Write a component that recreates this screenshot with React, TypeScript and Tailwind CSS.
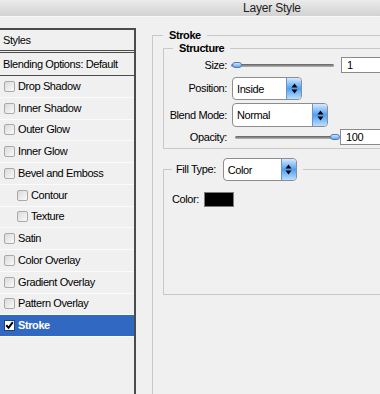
import React from "react";

function Check({ checked }: { checked?: boolean }) {
  if (checked) {
    return (
      <span className="flex h-[11px] w-[11px] shrink-0 items-center justify-center border border-[#1d3f86] bg-white">
        <svg width="9" height="9" viewBox="0 0 9 9">
          <path d="M1.2 4.2 L3.6 6.8 L7.8 1.2" stroke="#000" strokeWidth="2" fill="none" />
        </svg>
      </span>
    );
  }
  return (
    <span className="h-[11px] w-[11px] shrink-0 rounded-[2px] border border-[#a9a9a9] bg-linear-to-br from-[#dadada] to-[#fafafa]" />
  );
}

function Arrows() {
  return (
    <svg width="9" height="13" viewBox="0 0 9 13">
      <path d="M1.5 5.5 L4.5 1.5 L7.5 5.5 Z" fill="#000" />
      <path d="M1.5 7.5 L4.5 11.5 L7.5 7.5 Z" fill="#000" />
    </svg>
  );
}

function Select({ text, className }: { text: string; className: string }) {
  return (
    <div className={"flex overflow-hidden rounded-[4px] border border-[#8d8d8d] bg-white " + className}>
      <span className="flex flex-1 items-center pl-[4px] pt-[1px]">{text}</span>
      <span className="flex w-[15px] items-center justify-center border-l border-[#6f93c4] bg-linear-to-b from-[#d4eaff] via-[#4f9df3] to-[#b9defd]">
        <Arrows />
      </span>
    </div>
  );
}

function Slider({ thumb }: { thumb: "left" | "right" }) {
  return (
    <div className="relative flex h-full w-[103px] items-center">
      <div className="h-[3px] w-full rounded-full bg-linear-to-b from-[#5e5e5e] to-[#b9b9b9]" />
      <div
        className={
          "absolute top-[5px] h-[6px] w-[10px] rounded-full border border-[#4a7cc0] bg-linear-to-b from-[#cfe4fd] to-[#6aa5ea] " +
          (thumb === "left" ? "left-[1px]" : "right-[-2px]")
        }
      />
    </div>
  );
}

const items: [string, boolean][] = [
  ["Drop Shadow", false],
  ["Inner Shadow", false],
  ["Outer Glow", false],
  ["Inner Glow", false],
  ["Bevel and Emboss", false],
  ["Contour", true],
  ["Texture", true],
  ["Satin", false],
  ["Color Overlay", false],
  ["Gradient Overlay", false],
  ["Pattern Overlay", false],
];

export default function App() {
  return (
    <div className="flex h-[394px] w-[380px] flex-col overflow-hidden bg-[#f0f0f0] font-['Liberation_Sans',Arial,sans-serif] text-[11px] leading-[13px] tracking-[-0.4px] text-black">
      <div className="flex h-[17px] shrink-0 items-start border-b border-[#f8f8f8] bg-linear-to-b from-[#ebebeb] to-[#d2d2d2] pl-[243px] pt-[1px] text-[12px] leading-[14px] tracking-[-0.2px] text-[#222]">
        Layer Style
      </div>
      <div className="flex flex-1">
        <div className="flex w-[136px] shrink-0 flex-col pt-[11px]">
          <div className="flex flex-1 flex-col border-r-2 border-[#4c4c4c]">
            <div className="flex h-[23px] items-center border-t-2 border-b border-[#4c4c4c] pl-[3px]">Styles</div>
            <div className="h-[1px]" />
            <div className="flex h-[24px] items-center border-t border-b border-[#4c4c4c] pl-[3px]">
              Blending Options: Default
            </div>
            {items.map(([label, indent]) => (
              <div
                key={label}
                className={
                  "flex h-[21.75px] items-center gap-[3px] border-b border-[#fbfbfb] " +
                  (indent ? "pl-[17px]" : "pl-[4px]")
                }
              >
                <Check />
                <span>{label}</span>
              </div>
            ))}
            <div className="flex h-[21.75px] items-center gap-[3px] border-b border-[#fbfbfb] bg-[#3168c2] pl-[4px] font-bold text-white">
              <Check checked />
              <span>Stroke</span>
            </div>
          </div>
        </div>
        <div className="pl-[16px] pt-[12px]">
          <fieldset className="h-[400px] w-[260px] border border-[#c9c9c9] pl-[10px]">
            <legend className="px-[6px] font-bold">Stroke</legend>
            <fieldset className="w-[240px] border border-[#c9c9c9] pb-[3px]">
              <legend className="ml-[9px] px-[6px] font-bold">Structure</legend>
              <div className="mt-[2px] flex h-[16px] items-center">
                <span className="w-[63px] text-right">Size:</span>
                <div className="ml-[4px] h-full">
                  <Slider thumb="left" />
                </div>
                <div className="ml-[7px] flex h-[16px] w-[50px] items-center border border-[#8a8a8a] bg-white pl-[5px]">1</div>
              </div>
              <div className="mt-[4px] flex h-[23px] items-center">
                <span className="w-[63px] text-right">Position:</span>
                <Select text="Inside" className="ml-[5px] h-[23px] w-[70px]" />
              </div>
              <div className="mt-[3px] flex h-[24px] items-center">
                <span className="w-[63px] text-right">Blend Mode:</span>
                <Select text="Normal" className="ml-[5px] h-[24px] w-[96px]" />
              </div>
              <div className="mt-[2px] flex h-[16px] items-center">
                <span className="w-[63px] text-right">Opacity:</span>
                <div className="ml-[8px] h-full">
                  <Slider thumb="right" />
                </div>
                <div className="ml-[2px] flex h-[16px] w-[50px] items-center border border-[#8a8a8a] bg-white pl-[5px]">100</div>
              </div>
            </fieldset>
            <fieldset className="mt-[9px] h-[137px] w-[240px] border border-[#c9c9c9]">
              <legend className="ml-[8px] pl-[4px] pr-[6px]">
                <div className="flex h-[23px] items-center gap-[7px]">
                  <span>Fill Type:</span>
                  <Select text="Color" className="h-[23px] w-[74px]" />
                </div>
              </legend>
              <div className="mt-[11px] flex items-center gap-[5px] pl-[8px]">
                <span>Color:</span>
                <span className="h-[15px] w-[30px] border border-[#7c7c7c] bg-black" />
              </div>
            </fieldset>
          </fieldset>
        </div>
      </div>
    </div>
  );
}
